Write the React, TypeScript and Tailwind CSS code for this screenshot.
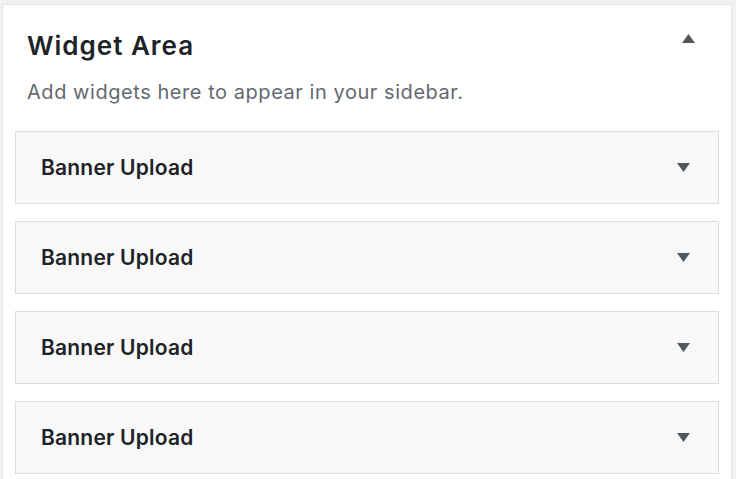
import React from "react";

const items = ["Banner Upload", "Banner Upload", "Banner Upload", "Banner Upload"];

function Caret({ up = false }: { up?: boolean }) {
  return (
    <svg width="13" height="9" viewBox="0 0 13 9" className="shrink-0">
      <path d={up ? "M6.5 0 L13 9 L0 9 Z" : "M0 0 L13 0 L6.5 9 Z"} fill="#50575e" />
    </svg>
  );
}

export default function App() {
  return (
    <div
      className="h-screen bg-[#f1f1f1] pt-1 pl-0.5 pr-1 overflow-hidden"
      style={{ fontFamily: "Inter, 'Noto Sans', sans-serif" }}
    >
      <div className="h-full bg-white border border-b-0 border-[#e2e4e7] px-3">
        <div className="flex items-start justify-between pl-3 pr-[24px] pt-[25px]">
          <h2 className="text-[26px] leading-8 font-semibold text-[#1d2327] tracking-[1px]">
            Widget Area
          </h2>
          <div className="pt-[4px]">
            <Caret up />
          </div>
        </div>
        <p className="pl-3 mt-[18px] text-[20px] leading-6 text-[#646970] tracking-[0.55px]">
          Add widgets here to appear in your sidebar.
        </p>
        <div className="mt-[27px] flex flex-col gap-[17px]">
          {items.map((t, i) => (
            <div
              key={i}
              className="h-[73px] flex items-center justify-between bg-[#f8f8f8] border border-[#dddddd] pl-[25px] pr-[28px]"
            >
              <span className="text-[21px] font-semibold text-[#1d2327] tracking-[0.2px]">{t}</span>
              <Caret />
            </div>
          ))}
        </div>
      </div>
    </div>
  );
}
